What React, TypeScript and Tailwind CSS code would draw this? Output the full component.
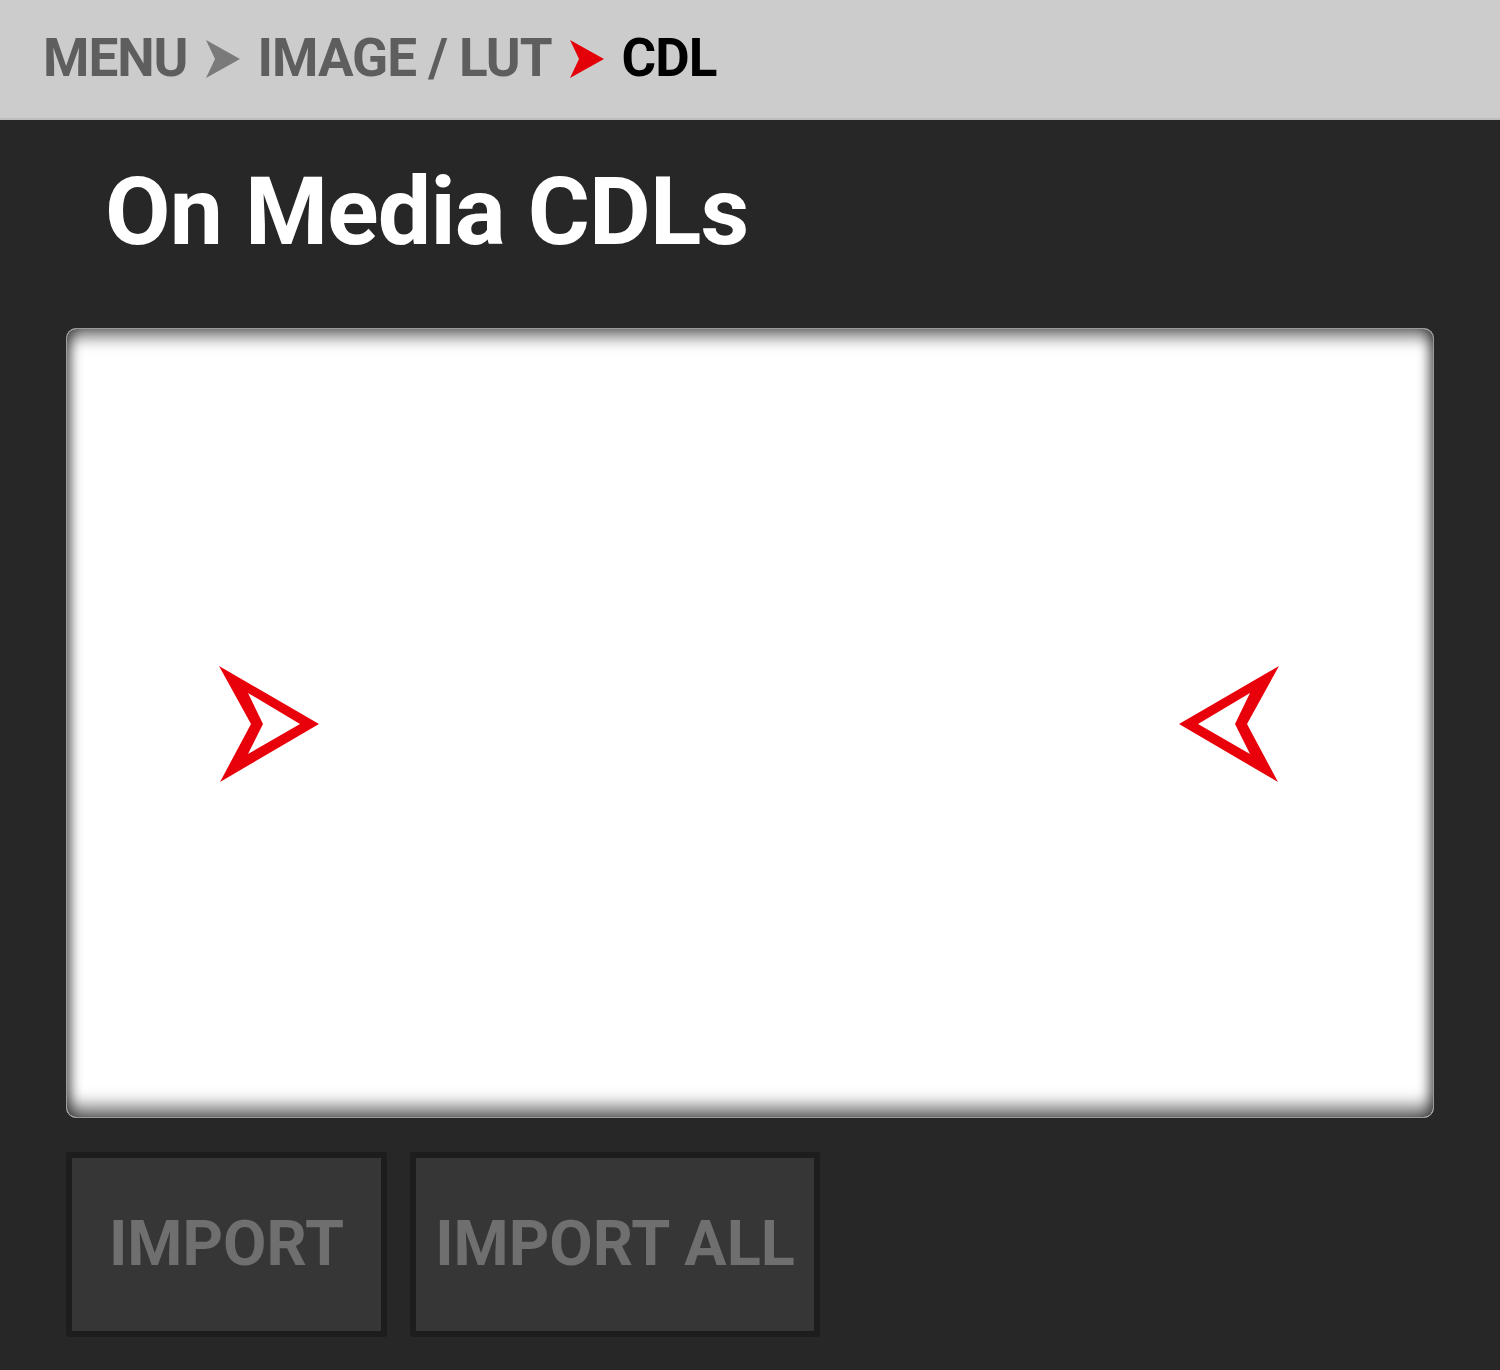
import React from 'react';

const font = { fontFamily: 'Roboto, "Liberation Sans", sans-serif' };

function Chevron({ color }: { color: string }) {
  return (
    <svg width="34" height="38" viewBox="0 0 34 38" className="shrink-0">
      <path d="M0 0 L34 19 L0 38 L9 19 Z" fill={color} />
    </svg>
  );
}

function NavArrow({ flip }: { flip?: boolean }) {
  return (
    <svg
      width="100"
      height="116"
      viewBox="0 0 100 116"
      className={flip ? '-scale-x-100' : ''}
    >
      <path
        fillRule="evenodd"
        d="M0 0 L100 58 L1 116 L32 58 Z M29 27 L81 58 L29 88 L44 58 Z"
        fill="#e8000b"
      />
    </svg>
  );
}

function ActionButton({ label, width }: { label: string; width: string }) {
  return (
    <button
      className={`${width} h-[185px] rounded-[3px] border-[6px] border-[#1d1d1d] bg-[#363636] text-[#6f6f6f] font-bold text-[63px] tracking-[0px] flex items-center justify-center`}
      style={font}
    >
      {label}
    </button>
  );
}

export default function App() {
  return (
    <div className="w-[1500px] h-[1370px] bg-[#272727] flex flex-col" style={font}>
      <header className="h-[120px] bg-[#cccccc] border-b-[2px] border-[#bdbdbd] flex items-center pl-[43px] pt-[2px] pb-[2px] gap-[18px] font-bold text-[53px] tracking-[-1px]">
        <span className="text-[#5e5e5e]">MENU</span>
        <Chevron color="#7a7a7a" />
        <span className="text-[#5e5e5e]">IMAGE / LUT</span>
        <Chevron color="#e30009" />
        <span className="text-black">CDL</span>
      </header>

      <h1 className="pl-[105px] pt-[22px] h-[208px] text-white font-bold text-[95px] tracking-[-0.8px] leading-[140px]">
        On Media CDLs
      </h1>

      <div className="mx-[66px] h-[790px] rounded-[10px] bg-white border border-[#9a9a9a] shadow-[inset_0_12px_16px_-4px_rgba(0,0,0,0.55),inset_0_-14px_18px_-4px_rgba(0,0,0,0.6),inset_10px_0_12px_-6px_rgba(0,0,0,0.35),inset_-10px_0_12px_-6px_rgba(0,0,0,0.35)] flex items-center justify-between pl-[152px] pr-[154px] pt-[2px]">
        <NavArrow />
        <NavArrow flip />
      </div>

      <div className="flex gap-[23px] pl-[66px] pt-[34px]">
        <ActionButton label="IMPORT" width="w-[321px]" />
        <ActionButton label="IMPORT ALL" width="w-[410px]" />
      </div>
    </div>
  );
}
